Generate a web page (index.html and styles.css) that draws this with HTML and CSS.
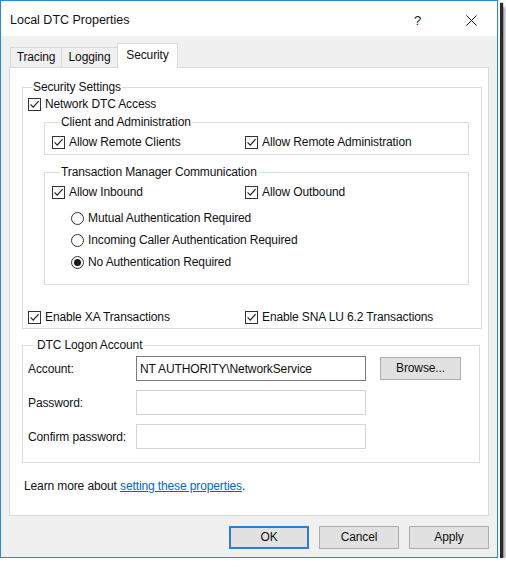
FILE: index.html
```html
<!DOCTYPE html>
<html lang="en">
<head>
    <meta charset="UTF-8">
    <meta name="viewport" content="width=device-width, initial-scale=1.0">
    <title>Local DTC Properties</title>
    <link rel="stylesheet" href="styles.css">
</head>
<body>
    <!-- shared glyphs for the check boxes and radio buttons -->
    <svg class="defs" width="0" height="0">
        <symbol id="cb" viewBox="0 0 13 13">
            <rect x="0.5" y="0.5" width="12" height="12" fill="#fff" stroke="#333"/>
            <path d="M2.6 6.4L5.2 9.1L10.6 3.2" fill="none" stroke="#222" stroke-width="1.2"/>
        </symbol>
        <symbol id="rb-off" viewBox="0 0 13 13">
            <circle cx="6.5" cy="6.5" r="6" fill="#fff" stroke="#333"/>
        </symbol>
        <symbol id="rb-on" viewBox="0 0 13 13">
            <circle cx="6.5" cy="6.5" r="6" fill="#fff" stroke="#333"/>
            <circle cx="6.5" cy="6.5" r="3.5" fill="#1a1a1a"/>
        </symbol>
    </svg>

    <div class="window">
        <div class="titlebar">
            <span class="title">Local DTC Properties</span>
            <span class="help">?</span>
            <svg class="close" width="11" height="11" viewBox="0 0 11 11">
                <path d="M0.5 0.5L10.5 10.5M10.5 0.5L0.5 10.5" stroke="#111" stroke-width="1"/>
            </svg>
        </div>

        <div class="tabs">
            <div class="tab tab-tracing">Tracing</div>
            <div class="tab tab-logging">Logging</div>
            <div class="tab tab-security active">Security</div>
        </div>

        <div class="panel">
            <fieldset class="group security">
                <legend>Security Settings</legend>
                <label class="opt network"><svg class="box"><use href="#cb"/></svg>Network DTC Access</label>

                <fieldset class="group inner client">
                    <legend>Client and Administration</legend>
                    <div class="pair">
                        <label class="opt"><svg class="box"><use href="#cb"/></svg>Allow Remote Clients</label>
                        <label class="opt"><svg class="box"><use href="#cb"/></svg>Allow Remote Administration</label>
                    </div>
                </fieldset>

                <fieldset class="group inner tm">
                    <legend>Transaction Manager Communication</legend>
                    <div class="pair">
                        <label class="opt"><svg class="box"><use href="#cb"/></svg>Allow Inbound</label>
                        <label class="opt"><svg class="box"><use href="#cb"/></svg>Allow Outbound</label>
                    </div>
                    <div class="radios">
                        <label class="opt"><svg class="box"><use href="#rb-off"/></svg>Mutual Authentication Required</label>
                        <label class="opt"><svg class="box"><use href="#rb-off"/></svg>Incoming Caller Authentication Required</label>
                        <label class="opt"><svg class="box"><use href="#rb-on"/></svg>No Authentication Required</label>
                    </div>
                </fieldset>

                <div class="pair wide">
                    <label class="opt"><svg class="box"><use href="#cb"/></svg>Enable XA Transactions</label>
                    <label class="opt"><svg class="box"><use href="#cb"/></svg>Enable SNA LU 6.2 Transactions</label>
                </div>
            </fieldset>

            <fieldset class="group logon">
                <legend>DTC Logon Account</legend>
                <div class="field-row">
                    <label>Account:</label>
                    <input class="field active" type="text" value="NT AUTHORITY\NetworkService">
                    <button class="btn browse">Browse...</button>
                </div>
                <div class="field-row">
                    <label>Password:</label>
                    <input class="field" type="text" value="">
                </div>
                <div class="field-row">
                    <label>Confirm password:</label>
                    <input class="field" type="text" value="">
                </div>
            </fieldset>

            <p class="learn">Learn more about <a href="#">setting these properties</a>.</p>
        </div>

        <div class="actions">
            <button class="btn default">OK</button>
            <button class="btn">Cancel</button>
            <button class="btn">Apply</button>
        </div>
    </div>
</body>
</html>
```

FILE: styles.css
```css
* {
    box-sizing: border-box;
}
body {
    margin: 0;
    background: #fff;
    font-family: "Liberation Sans", Arial, sans-serif;
    font-size: 12px;
    line-height: 15px;
    letter-spacing: -0.12px;
    color: #111;
}
.defs {
    display: block;
}

/* dialog frame */
.window {
    width: 498px;
    height: 558px;
    border: 1px solid #2b88d8;
    background: #f0f0f0;
    display: flex;
    flex-direction: column;
    box-shadow: 1px 1px 0 1px #f4f4f4, 4px 4px 1px 1px #2a2a2a, 7px 7px 3px rgba(0,0,0,0.4);
}
.titlebar {
    height: 35px;
    flex: none;
    background: #fff;
    display: flex;
    align-items: center;
    padding: 4px 20px 0 9px;
}
.title {
    font-size: 12.5px;
    letter-spacing: 0;
}
.help {
    margin-left: auto;
    margin-right: 45px;
    font-size: 13px;
    color: #222;
}
.close {
    flex: none;
}

/* tab strip */
.tabs {
    display: flex;
    align-items: flex-start;
    height: 25px;
    margin-top: 7px;
    padding-left: 9px;
    flex: none;
}
.tab {
    height: 20px;
    margin-top: 4px;
    border: 1px solid #d9d9d9;
    border-bottom: none;
    background: #f0f0f0;
    text-align: center;
    line-height: 19px;
}
.tab-tracing {
    width: 52px;
}
.tab-logging {
    width: 57px;
    margin-left: -1px;
}
.tab-security {
    width: 61px;
    margin-left: -1px;
}
.tab.active {
    height: 25px;
    margin-top: 0;
    background: #fff;
    line-height: 22px;
    position: relative;
    z-index: 1;
}

.panel {
    height: 449px;
    margin: -1px 8px 0;
    border: 1px solid #d9d9d9;
    background: #fff;
    flex: none;
}

/* group boxes */
.group {
    margin: 0;
    padding: 0;
    min-width: 0;
    border: 1px solid #dcdcdc;
}
.group legend {
    padding: 0 1px;
    margin-left: 8px;
    line-height: 14px;
}
.security {
    margin: 12px 6px 0 12px;
    padding-bottom: 3px;
}
.security > legend {
    margin-left: 9px;
}
.inner {
    margin-left: 21px;
    margin-right: 12px;
    padding-left: 7px;
}
.client {
    margin-top: 3px;
    padding-bottom: 4px;
}
.client .pair {
    margin-top: 6px;
}
.tm {
    margin-top: 10px;
    padding-bottom: 14px;
}
.tm .pair {
    margin-top: 6px;
}

/* check boxes and radios */
.opt {
    display: flex;
    align-items: center;
    height: 15px;
    white-space: nowrap;
}
.box {
    width: 13px;
    height: 13px;
    margin-right: 4px;
    flex: none;
}
.network {
    margin: 3px 0 0 5px;
}
.pair {
    display: grid;
    grid-template-columns: 193px auto;
}
.pair.wide {
    grid-template-columns: 217px auto;
    margin: 25px 0 0 5px;
}
.radios {
    padding-left: 19px;
}
.radios .opt {
    margin-top: 7px;
}
.radios .opt:first-child {
    margin-top: 11px;
}

/* logon account */
.logon {
    margin: 9px 8px 0 12px;
    padding: 0 0 13px 5px;
}
.field-row {
    display: flex;
    align-items: center;
    height: 25px;
    margin-top: 9px;
}
.field-row:first-of-type {
    margin-top: 4px;
}
.field-row label {
    width: 108px;
    padding-top: 2px;
}
.field {
    width: 230px;
    height: 25px;
    border: 1px solid #d4d4d4;
    padding: 0 3px;
    font: inherit;
    letter-spacing: inherit;
    color: #111;
    background: #fff;
    outline: none;
}
.field.active {
    border-color: #7a7a7a;
}

.btn {
    width: 80px;
    height: 23px;
    border: 1px solid #adadad;
    background: #e1e1e1;
    font: inherit;
    letter-spacing: inherit;
    color: #111;
    padding: 0;
}
.browse {
    width: 81px;
    margin-left: 14px;
}
.btn.default {
    border: 2px solid #2a7fd4;
}

.learn {
    margin: 16px 0 0 14px;
}
.learn a {
    color: #0066cc;
}

.actions {
    display: flex;
    justify-content: flex-end;
    gap: 10px;
    padding: 10px 8px 0;
}
```
